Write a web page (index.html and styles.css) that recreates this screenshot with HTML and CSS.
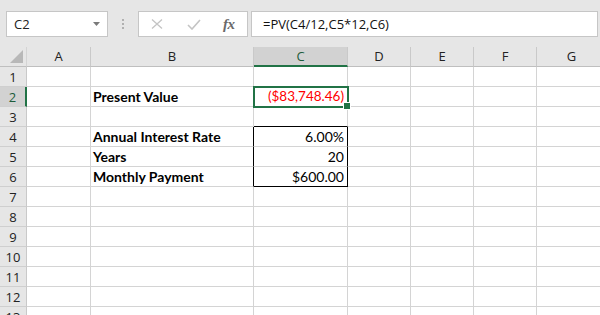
FILE: index.html
```html
<!DOCTYPE html>
<html lang="en">
<head>
    <meta charset="UTF-8">
    <title>Present Value</title>
    <link rel="stylesheet" href="styles.css">
</head>
<body>
    <div class="toolbar">
        <div class="namebox">
            <span>C2</span>
            <svg class="caret" width="7" height="4" viewBox="0 0 7 4"><path d="M0 0h7L3.5 4z" fill="#7a7a7a"/></svg>
        </div>
        <div class="grip"><i></i><i></i><i></i></div>
        <div class="fx-buttons">
            <svg width="12" height="10" viewBox="0 0 12 10"><path d="M1 0.5l10 9M11 0.5l-10 9" stroke="#c4c4c4" stroke-width="1.3" fill="none"/></svg>
            <svg width="14" height="11" viewBox="0 0 14 11"><path d="M1 6l4 4L13 1" stroke="#c4c4c4" stroke-width="1.6" fill="none"/></svg>
            <span class="fx">fx</span>
        </div>
        <div class="formula">=PV(C4/12,C5*12,C6)</div>
    </div>

    <div class="sheet">
        <div class="row head">
            <div class="cell corner"><svg width="13" height="13" viewBox="0 0 13 13"><path d="M13 0v13H0z" fill="#b8b8b8"/></svg></div>
            <div class="cell">A</div>
            <div class="cell">B</div>
            <div class="cell sel-col">C</div>
            <div class="cell">D</div>
            <div class="cell">E</div>
            <div class="cell">F</div>
            <div class="cell">G</div>
        </div>
        <div class="row">
            <div class="cell rh">1</div>
            <div class="cell"></div><div class="cell"></div><div class="cell"></div>
            <div class="cell"></div><div class="cell"></div><div class="cell"></div><div class="cell"></div>
        </div>
        <div class="row">
            <div class="cell rh sel-row">2</div>
            <div class="cell"></div>
            <div class="cell label">Present Value</div>
            <div class="cell num red active">($83,748.46)<span class="handle"></span></div>
            <div class="cell"></div><div class="cell"></div><div class="cell"></div><div class="cell"></div>
        </div>
        <div class="row">
            <div class="cell rh">3</div>
            <div class="cell"></div><div class="cell"></div><div class="cell box-top"></div>
            <div class="cell"></div><div class="cell"></div><div class="cell"></div><div class="cell"></div>
        </div>
        <div class="row">
            <div class="cell rh">4</div>
            <div class="cell"></div>
            <div class="cell label box-left">Annual Interest Rate</div>
            <div class="cell num box">6.00%</div>
            <div class="cell"></div><div class="cell"></div><div class="cell"></div><div class="cell"></div>
        </div>
        <div class="row">
            <div class="cell rh">5</div>
            <div class="cell"></div>
            <div class="cell label box-left">Years</div>
            <div class="cell num box">20</div>
            <div class="cell"></div><div class="cell"></div><div class="cell"></div><div class="cell"></div>
        </div>
        <div class="row">
            <div class="cell rh">6</div>
            <div class="cell"></div>
            <div class="cell label box-left">Monthly Payment</div>
            <div class="cell num box box-bottom">$600.00</div>
            <div class="cell"></div><div class="cell"></div><div class="cell"></div><div class="cell"></div>
        </div>
        <div class="row">
            <div class="cell rh">7</div>
            <div class="cell"></div><div class="cell"></div><div class="cell"></div>
            <div class="cell"></div><div class="cell"></div><div class="cell"></div><div class="cell"></div>
        </div>
        <div class="row">
            <div class="cell rh">8</div>
            <div class="cell"></div><div class="cell"></div><div class="cell"></div>
            <div class="cell"></div><div class="cell"></div><div class="cell"></div><div class="cell"></div>
        </div>
        <div class="row">
            <div class="cell rh">9</div>
            <div class="cell"></div><div class="cell"></div><div class="cell"></div>
            <div class="cell"></div><div class="cell"></div><div class="cell"></div><div class="cell"></div>
        </div>
        <div class="row">
            <div class="cell rh">10</div>
            <div class="cell"></div><div class="cell"></div><div class="cell"></div>
            <div class="cell"></div><div class="cell"></div><div class="cell"></div><div class="cell"></div>
        </div>
        <div class="row">
            <div class="cell rh">11</div>
            <div class="cell"></div><div class="cell"></div><div class="cell"></div>
            <div class="cell"></div><div class="cell"></div><div class="cell"></div><div class="cell"></div>
        </div>
        <div class="row">
            <div class="cell rh">12</div>
            <div class="cell"></div><div class="cell"></div><div class="cell"></div>
            <div class="cell"></div><div class="cell"></div><div class="cell"></div><div class="cell"></div>
        </div>
        <div class="row">
            <div class="cell rh">13</div>
            <div class="cell"></div><div class="cell"></div><div class="cell"></div>
            <div class="cell"></div><div class="cell"></div><div class="cell"></div><div class="cell"></div>
        </div>
    </div>
</body>
</html>
```

FILE: styles.css
```css
* {
    margin: 0;
    padding: 0;
    box-sizing: border-box;
}

body {
    width: 600px;
    height: 315px;
    overflow: hidden;
    background: #e6e6e6;
    font-family: "Open Sans", "Noto Sans", sans-serif;
    color: #222;
}

/* formula bar */
.toolbar {
    display: flex;
    align-items: flex-start;
    height: 47px;
    padding: 11px 0 0 6px;
}

.namebox,
.fx-buttons,
.formula {
    height: 26px;
    background: #fff;
    border: 1px solid #c6c6c6;
}

.namebox {
    width: 102px;
    display: flex;
    align-items: center;
    justify-content: space-between;
    padding: 0 7px;
    font-size: 13px;
}

.grip {
    width: 30px;
    height: 26px;
    display: flex;
    flex-direction: column;
    align-items: center;
    justify-content: center;
    gap: 2px;
}

.grip i {
    width: 2px;
    height: 2px;
    background: #b0b0b0;
}

.fx-buttons {
    width: 110px;
    display: flex;
    align-items: center;
    padding-left: 12px;
}

.fx-buttons svg:first-child {
    margin-right: 24px;
}

.fx-buttons svg:nth-child(2) {
    margin-right: 22px;
}

.fx {
    font-family: "Liberation Serif", serif;
    font-style: italic;
    font-weight: bold;
    font-size: 15px;
    color: #6a6a6a;
    letter-spacing: -0.5px;
}

.formula {
    width: 347px;
    margin-left: 3px;
    padding-left: 11px;
    font-size: 13px;
    line-height: 24px;
    color: #111;
}

/* grid */
.sheet {
    background: #fff;
}

.row {
    display: grid;
    grid-template-columns: 27px 64px 163px 94px 63px 63px 63px 70px;
    height: 20px;
}

.cell {
    height: 20px;
    border-right: 1px solid #d4d4d4;
    border-bottom: 1px solid #d4d4d4;
    padding: 0 3px;
    font-family: Lato, "Liberation Sans", sans-serif;
    font-size: 14px;
    line-height: 19px;
    white-space: nowrap;
    position: relative;
}

.head .cell {
    background: #e6e6e6;
    border-right-color: #c9c9c9;
    border-bottom-color: #bfbfbf;
    font-family: "Open Sans", "Noto Sans", sans-serif;
    font-size: 13px;
    text-align: center;
    color: #222;
}

.head .corner {
    padding: 3px 3px 0 0;
    text-align: right;
    line-height: 0;
    border-right-color: #d4d4d4;
}

.head .sel-col {
    background: #d2d2d2;
    border-bottom: 2px solid #217346;
    line-height: 18px;
    color: #1d5c3a;
}

.rh {
    background: #e6e6e6;
    border-right-color: #c9c9c9;
    border-bottom-color: #cfcfcf;
    font-family: "Open Sans", "Noto Sans", sans-serif;
    font-size: 13px;
    line-height: 20px;
    text-align: center;
    color: #222;
}

.rh.sel-row {
    background: #d2d2d2;
    border-right: 2px solid #217346;
    color: #1d5c3a;
}

.label {
    font-weight: bold;
    color: #000;
    padding-left: 2px;
}

.num {
    text-align: right;
    color: #000;
}

.red {
    color: #ff0000;
    font-size: 13.5px;
}

.active {
    outline: 2px solid #217346;
    outline-offset: -1px;
    z-index: 1;
}

.handle {
    position: absolute;
    right: -4px;
    bottom: -4px;
    width: 6px;
    height: 6px;
    background: #217346;
    border: 1px solid #fff;
    box-sizing: content-box;
}

.box-top {
    border-bottom-color: #000;
}

.box-left,
.box {
    border-right-color: #000;
}

.box-bottom {
    border-bottom-color: #000;
}
```
